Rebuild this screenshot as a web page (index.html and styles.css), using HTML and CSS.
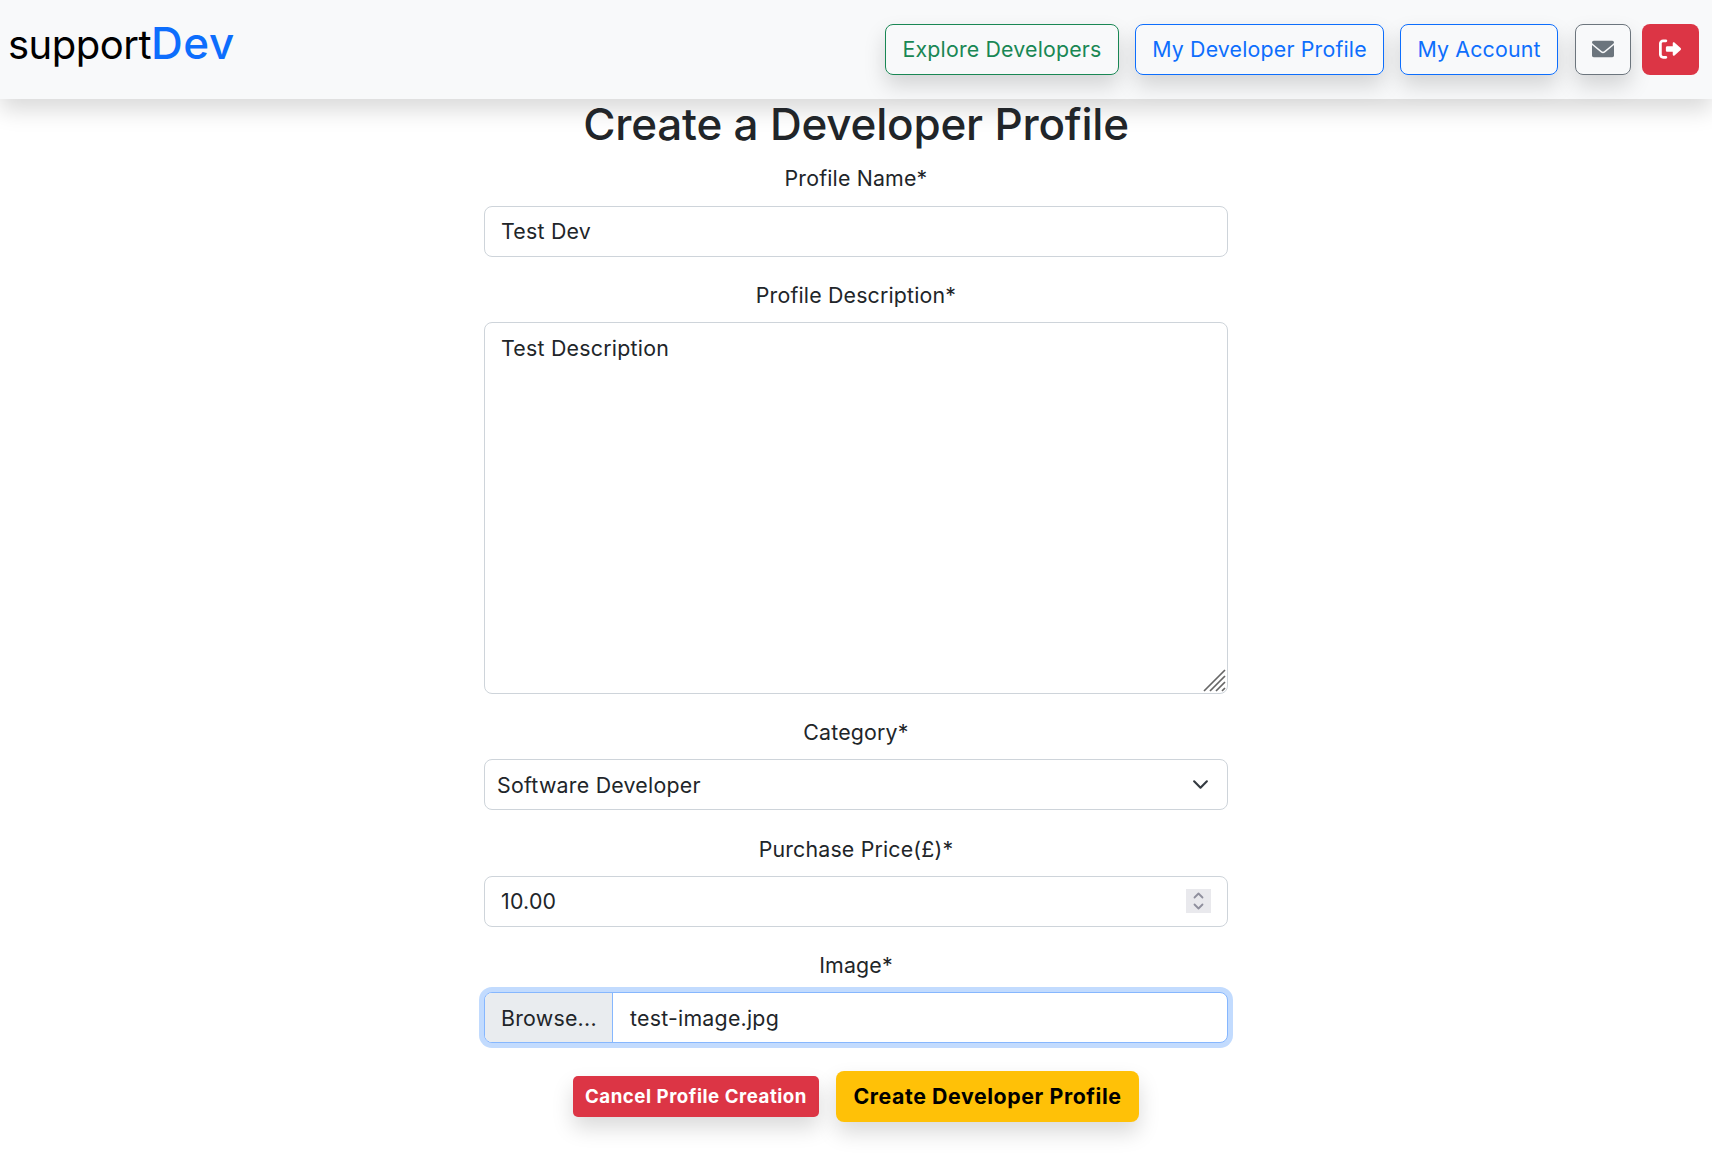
FILE: index.html
```html
<!DOCTYPE html>
<html lang="en">
<head>
<meta charset="utf-8">
<title>supportDev</title>
<link rel="stylesheet" href="styles.css">
</head>
<body>
<header class="navbar">
  <a class="brand">support<span class="brand-accent">Dev</span></a>
  <nav class="nav-actions">
    <a class="btn btn-outline-success">Explore Developers</a>
    <a class="btn btn-outline-primary">My Developer Profile</a>
    <a class="btn btn-outline-primary btn-account">My Account</a>
    <a class="btn btn-outline-secondary btn-mail" aria-label="Messages"><svg class="icon" viewBox="0 0 512 512"><path d="M256 352c-16.500 0-33-5.600-46.300-16.700L0 160v248c0 22.100 17.900 40 40 40h432c22.100 0 40-17.900 40-40V160L302.300 335.300C289 346.400 272.500 352 256 352zM16.300 131.900L230.200 310.600c15 12.500 36.600 12.500 51.600 0L495.700 131.900c10.200-8.300 16.300-18.200 16.300-27.900C512 81.900 494.100 64 472 64H40C17.900 64 0 81.900 0 104c0 9.700 6.100 19.600 16.300 27.900z"/></svg></a>
    <a class="btn btn-danger btn-logout" aria-label="Log out"><svg class="icon" viewBox="0 0 512 512"><path d="M160 416H96c-17.700 0-32-14.300-32-32V128c0-17.700 14.300-32 32-32h64c17.700 0 32-14.300 32-32s-14.300-32-32-32H96C43 32 0 75 0 128v256c0 53 43 96 96 96h64c17.700 0 32-14.300 32-32s-14.300-32-32-32zM502.600 233.400L359 104c-6.600-6-15.500-9-24-5.300s-15 12-15 21.300v72H192c-17.700 0-32 14.300-32 32v64c0 17.700 14.300 32 32 32h128v72c0 9.600 5.700 18.200 14.500 22s19 2 26-4.600l142.100-133c6-6 9.400-13.900 9.400-22.400s-3.400-16.600-9.400-22.600z"/></svg></a>
  </nav>
</header>
<main class="page">
  <h1 class="title">Create a Developer Profile</h1>
  <form class="form">
    <div class="field">
      <label class="label" for="name">Profile Name*</label>
      <input class="control" id="name" type="text" value="Test Dev">
    </div>
    <div class="field">
      <label class="label" for="desc">Profile Description*</label>
      <div class="area-wrap">
        <textarea class="control area" id="desc" spellcheck="false">Test Description</textarea>
        <svg class="grip" viewBox="0 0 23 23"><path d="M1 22L22 1M7 22L22 7M13 22L22 13M19 22L22 19"/></svg>
      </div>
    </div>
    <div class="field">
      <span class="label">Category*</span>
      <div class="control select"><span>Software Developer</span>
        <svg class="chevron" viewBox="0 0 16 16"><path d="M2 5l6 6 6-6"/></svg>
      </div>
    </div>
    <div class="field">
      <span class="label">Purchase Price(£)*</span>
      <div class="control number"><span>10.00</span>
        <span class="spinner"><svg class="spin-icon" viewBox="0 0 25 24"><path d="M8.500 8.500l4-4 4 4M8.500 15.500l4 4 4-4"/></svg></span>
      </div>
    </div>
    <div class="field">
      <span class="label">Image*</span>
      <div class="control file"><span class="browse">Browse...</span><span class="filename">test-image.jpg</span></div>
    </div>
    <div class="actions">
      <button class="btn btn-danger btn-small" type="button">Cancel Profile Creation</button>
      <button class="btn btn-warning" type="button">Create Developer Profile</button>
    </div>
  </form>
</main>
</body>
</html>
```
FILE: styles.css
```css
* { box-sizing: border-box; }
body {
  margin: 0;
  min-height: 100vh;
  font-family: Inter, "Liberation Sans", sans-serif;
  font-size: 21.33px;
  line-height: 32px;
  letter-spacing: .18px;
  color: #212529;
  background: #fff;
}
.navbar {
  display: flex;
  justify-content: space-between;
  align-items: flex-start;
  height: 99px;
  padding: 24px 13px 0 8px;
  background: #f8f9fa;
  box-shadow: 0 10.67px 21.33px rgba(0, 0, 0, .15);
}
.brand {
  color: #000;
  font-size: 40px;
  line-height: 39px;
  letter-spacing: -.5px;
}
.brand-accent { color: #0d6efd; font-size: 44px; font-weight: 500; letter-spacing: .6px; }
.nav-actions { display: flex; }
.btn {
  display: flex;
  align-items: center;
  justify-content: center;
  height: 51px;
  padding: 0 17px 2px;
  border: 1px solid transparent;
  border-radius: 8px;
  font: inherit;
  letter-spacing: inherit;
  white-space: nowrap;
  box-shadow: 0 10.67px 21.33px rgba(0, 0, 0, .15);
}
.btn-outline-success { width: 234px; margin-right: 16px; padding: 0 0 2px; border-color: #198754; color: #198754; }
.btn-outline-primary { width: 249px; margin-right: 16px; padding: 0 0 2px; border-color: #0d6efd; color: #0d6efd; }
.btn-account { width: 158px; }
.btn-outline-secondary { border-color: #6c757d; color: #6c757d; }
.btn-mail { width: 56px; margin: 0 11px 0 1px; padding: 0 0 1px; }
.btn-danger { background: #dc3545; color: #fff; }
.btn-logout { width: 57px; padding: 0 1px 1px 0; box-shadow: none; }
.icon { width: 22px; height: 22px; fill: currentColor; }
.page { display: flex; flex-direction: column; align-items: center; }
.title {
  margin: 0;
  padding-bottom: 12.4px;
  font-size: 44px;
  line-height: 51px;
  font-weight: 500;
  letter-spacing: -.2px;
}
.form { width: 744px; }
.field { display: flex; flex-direction: column; margin-bottom: 22.2px; }
.label { height: 32px; margin-bottom: 11.2px; text-align: center; }
.control {
  width: 100%;
  height: 51px;
  padding: 0 16px;
  border: 1px solid #ced4da;
  border-radius: 8px;
  background: #fff;
  color: #212529;
  font: inherit;
  letter-spacing: .24px;
  outline: none;
}
.area-wrap { position: relative; height: 372px; }
.area { display: block; height: 372px; padding-top: 9px; resize: none; }
.grip { position: absolute; right: 2px; bottom: 2px; width: 23px; height: 23px; fill: none; stroke: #666; stroke-width: 1.700; }
.select, .number { display: flex; align-items: center; justify-content: space-between; }
.select { padding: 0 18px 0 12px; }
.chevron { width: 17px; height: 17px; fill: none; stroke: #343a40; stroke-width: 2; stroke-linecap: round; stroke-linejoin: round; }
.number { padding-right: 16px; }
.spinner { width: 25px; height: 24px; background: #e9e9ed; }
.spin-icon { display: block; width: 25px; height: 24px; fill: none; stroke: #8f8f9d; stroke-width: 1.800; stroke-linecap: round; stroke-linejoin: round; }
.file { display: flex; padding: 0; border-color: #86b7fe; box-shadow: 0 0 0 5px #c2dbfe; overflow: hidden; }
.browse, .filename { display: flex; align-items: center; padding: 1px 16px 0; }
.filename { padding-left: 17px; }
.browse { width: 128px; background: #e9ecef; border-right: 1px solid #86b7fe; }
.actions { display: flex; align-items: center; justify-content: center; gap: 17px; padding-top: 6px; }
.btn-small { width: 246px; height: 41px; padding: 0; border-radius: 5px; font-size: 18.67px; font-weight: 700; letter-spacing: .53px; }
.btn-warning { width: 303px; padding: 0 0 2px; background: #ffc107; color: #000; font-weight: 700; letter-spacing: .58px; }
```
